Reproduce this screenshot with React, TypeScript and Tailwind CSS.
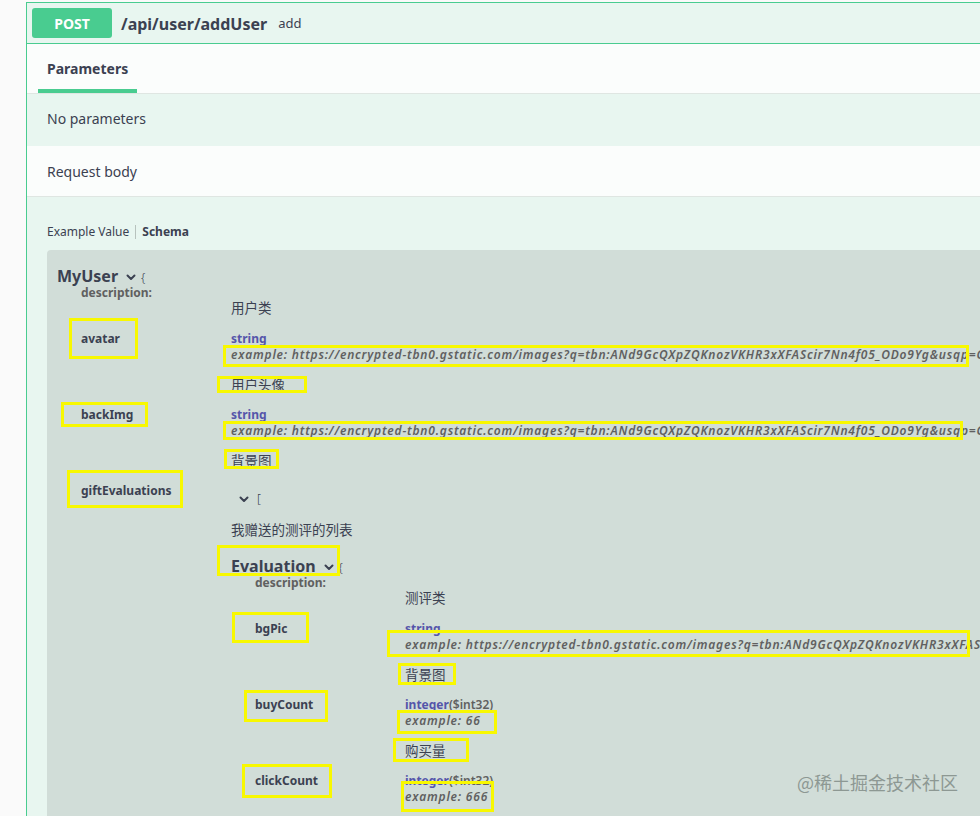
import React from 'react';

const sans = "font-['Noto_Sans','Noto_Sans_CJK_SC',sans-serif]";

// hand-drawn annotation boxes from the original screenshot: [left, top, right, bottom]
const marks: [number, number, number, number][] = [
  [69, 318, 138, 359],
  [223, 345, 969, 367],
  [217, 376, 307, 393],
  [61, 402, 148, 427],
  [223, 421, 963, 440],
  [224, 449, 279, 469],
  [67, 470, 183, 508],
  [217, 545, 340, 576],
  [232, 612, 309, 643],
  [387, 630, 970, 657],
  [398, 663, 456, 685],
  [244, 690, 328, 722],
  [397, 710, 497, 734],
  [393, 738, 469, 762],
  [242, 764, 332, 798],
  [401, 781, 494, 812],
];

const url =
  'https://encrypted-tbn0.gstatic.com/images?q=tbn:ANd9GcQXpZQKnozVKHR3xXFAScir7Nn4f05_ODo9Yg&usqp=CAU';

function Chevron() {
  return (
    <svg width="10" height="7" viewBox="0 0 10 7" className="inline-block">
      <path d="M1.5 1.5 L5 5 L8.5 1.5" fill="none" stroke="#3b4151" strokeWidth="2" strokeLinecap="round" strokeLinejoin="round" />
    </svg>
  );
}

function ModelTitle({ name }: { name: string }) {
  return (
    <div className="h-[20px] flex items-center leading-[20px] whitespace-nowrap">
      <span className="text-[16px] font-bold text-[#3b4151]">{name}</span>
      <span className="ml-[8px] mt-[2px] flex items-center">
        <Chevron />
      </span>
      <span className="ml-[5px] mt-[3px] text-[12px] font-light text-[#3b4151]">{'{'}</span>
    </div>
  );
}

function DescRow({ text }: { text: string }) {
  return (
    <div className="flex">
      <div className="w-[150px] shrink-0 h-[14px] leading-[14px] text-[12px] font-bold text-[#606060]">
        description:
      </div>
      <div className="pt-[14px] h-[30px] leading-[16px] text-[13.5px] text-[#3b4151]">{text}</div>
    </div>
  );
}

function Prop({ name, type, format, example, desc }: { name: string; type: string; format?: string; example: string; desc: string }) {
  return (
    <div className="flex">
      <div className="w-[150px] shrink-0 h-[16px] leading-[16px] text-[12px] font-bold text-[#3b4151]">{name}</div>
      <div className="flex flex-col whitespace-nowrap">
        <div className="h-[16px] leading-[16px] text-[12px]">
          <span className="font-bold text-[#55a]">{type}</span>
          {format && <span className="font-semibold text-[#606060]">{format}</span>}
        </div>
        <div className="h-[16px] leading-[16px] text-[12px] italic font-semibold tracking-[0.8px] text-[#606060]">
          example: {example}
        </div>
        <div className="mt-[14px] mb-[14px] h-[16px] leading-[16px] text-[13.5px] text-[#3b4151]">{desc}</div>
      </div>
    </div>
  );
}

export default function App() {
  return (
    <div className={`relative w-[980px] h-[816px] overflow-hidden bg-[#fafafa] pt-[2px] pl-[26px] ${sans}`}>
      <div className="w-[1000px] border border-[#49cc90] bg-[#e8f6f0]">
        {/* header */}
        <div className="h-[41px] flex items-center pl-[5px] border-b border-[#49cc90]">
          <div className="w-[80px] h-[30px] rounded-[3px] bg-[#49cc90] flex items-center justify-center text-white text-[14px] font-bold">
            POST
          </div>
          <span className="ml-[9px] mt-[2px] text-[16px] font-bold text-[#3b4151]">/api/user/addUser</span>
          <span className="ml-[11px] mt-[2px] text-[13px] text-[#3b4151]">add</span>
        </div>

        {/* tabs */}
        <div className="bg-[#fbfdfc] border-b border-[#dfe6e2] flex">
          <div className="ml-[11px] h-[49px] pt-[15px] px-[9px] border-b-4 border-[#49cc90] leading-[20px] text-[14px] font-bold text-[#3b4151]">
            Parameters
          </div>
        </div>

        <div className="h-[52px] pt-[15px] px-[20px] leading-[20px] text-[14px] text-[#3b4151]">No parameters</div>

        <div className="h-[51px] pt-[16px] px-[20px] leading-[20px] text-[14px] text-[#3b4151] bg-[#fbfdfc] border-b border-[#dfe6e2]">
          Request body
        </div>

        <div className="pt-[27px] px-[20px]">
          <div className="flex items-center h-[16px] text-[12px] text-[#3b4151]">
            <span>Example Value</span>
            <span className="mx-[6px] h-[14px] border-l border-[#b7c2bd]" />
            <span className="font-bold">Schema</span>
          </div>

          <div className="mt-[10px] rounded-[4px] bg-[#d1ddd8] pt-[16px] pl-[10px] pb-[40px]">
            <ModelTitle name="MyUser" />
            <div className="ml-[24px]">
              <DescRow text="用户类" />
              <div className="mt-[15px]">
                <Prop name="avatar" type="string" example={url} desc="用户头像" />
                <Prop name="backImg" type="string" example={url} desc="背景图" />
                <div className="flex">
                  <div className="w-[150px] shrink-0 h-[16px] leading-[16px] text-[12px] font-bold text-[#3b4151]">giftEvaluations</div>
                  <div className="pt-[8px]">
                    <div className="h-[16px] flex items-center pl-[8px]">
                      <Chevron />
                      <span className="ml-[8px] text-[12px] font-light text-[#3b4151]">[</span>
                    </div>
                    <div className="mt-[15px] h-[16px] leading-[16px] text-[13.5px] text-[#3b4151] whitespace-nowrap">
                      我赠送的测评的列表
                    </div>
                    <div className="mt-[18px]">
                      <ModelTitle name="Evaluation" />
                      <div className="ml-[24px]">
                        <DescRow text="测评类" />
                        <div className="mt-[15px]">
                          <Prop name="bgPic" type="string" example={url} desc="背景图" />
                          <Prop name="buyCount" type="integer" format="($int32)" example="66" desc="购买量" />
                          <Prop name="clickCount" type="integer" format="($int32)" example="666" desc="点击量" />
                        </div>
                      </div>
                    </div>
                  </div>
                </div>
              </div>
            </div>
          </div>
        </div>
      </div>

      {/* annotations */}
      {marks.map(([l, t, r, b], i) => (
        <div
          key={i}
          className="absolute border-[3px] border-[#f8f800] pointer-events-none"
          style={{ left: l, top: t, width: r - l, height: b - t }}
        />
      ))}

      <div className="absolute left-[797px] top-[771px] text-[18px] leading-[22px] text-[#8d9893] font-['Noto_Sans_CJK_SC',sans-serif] whitespace-nowrap">
        @稀土掘金技术社区
      </div>
    </div>
  );
}
